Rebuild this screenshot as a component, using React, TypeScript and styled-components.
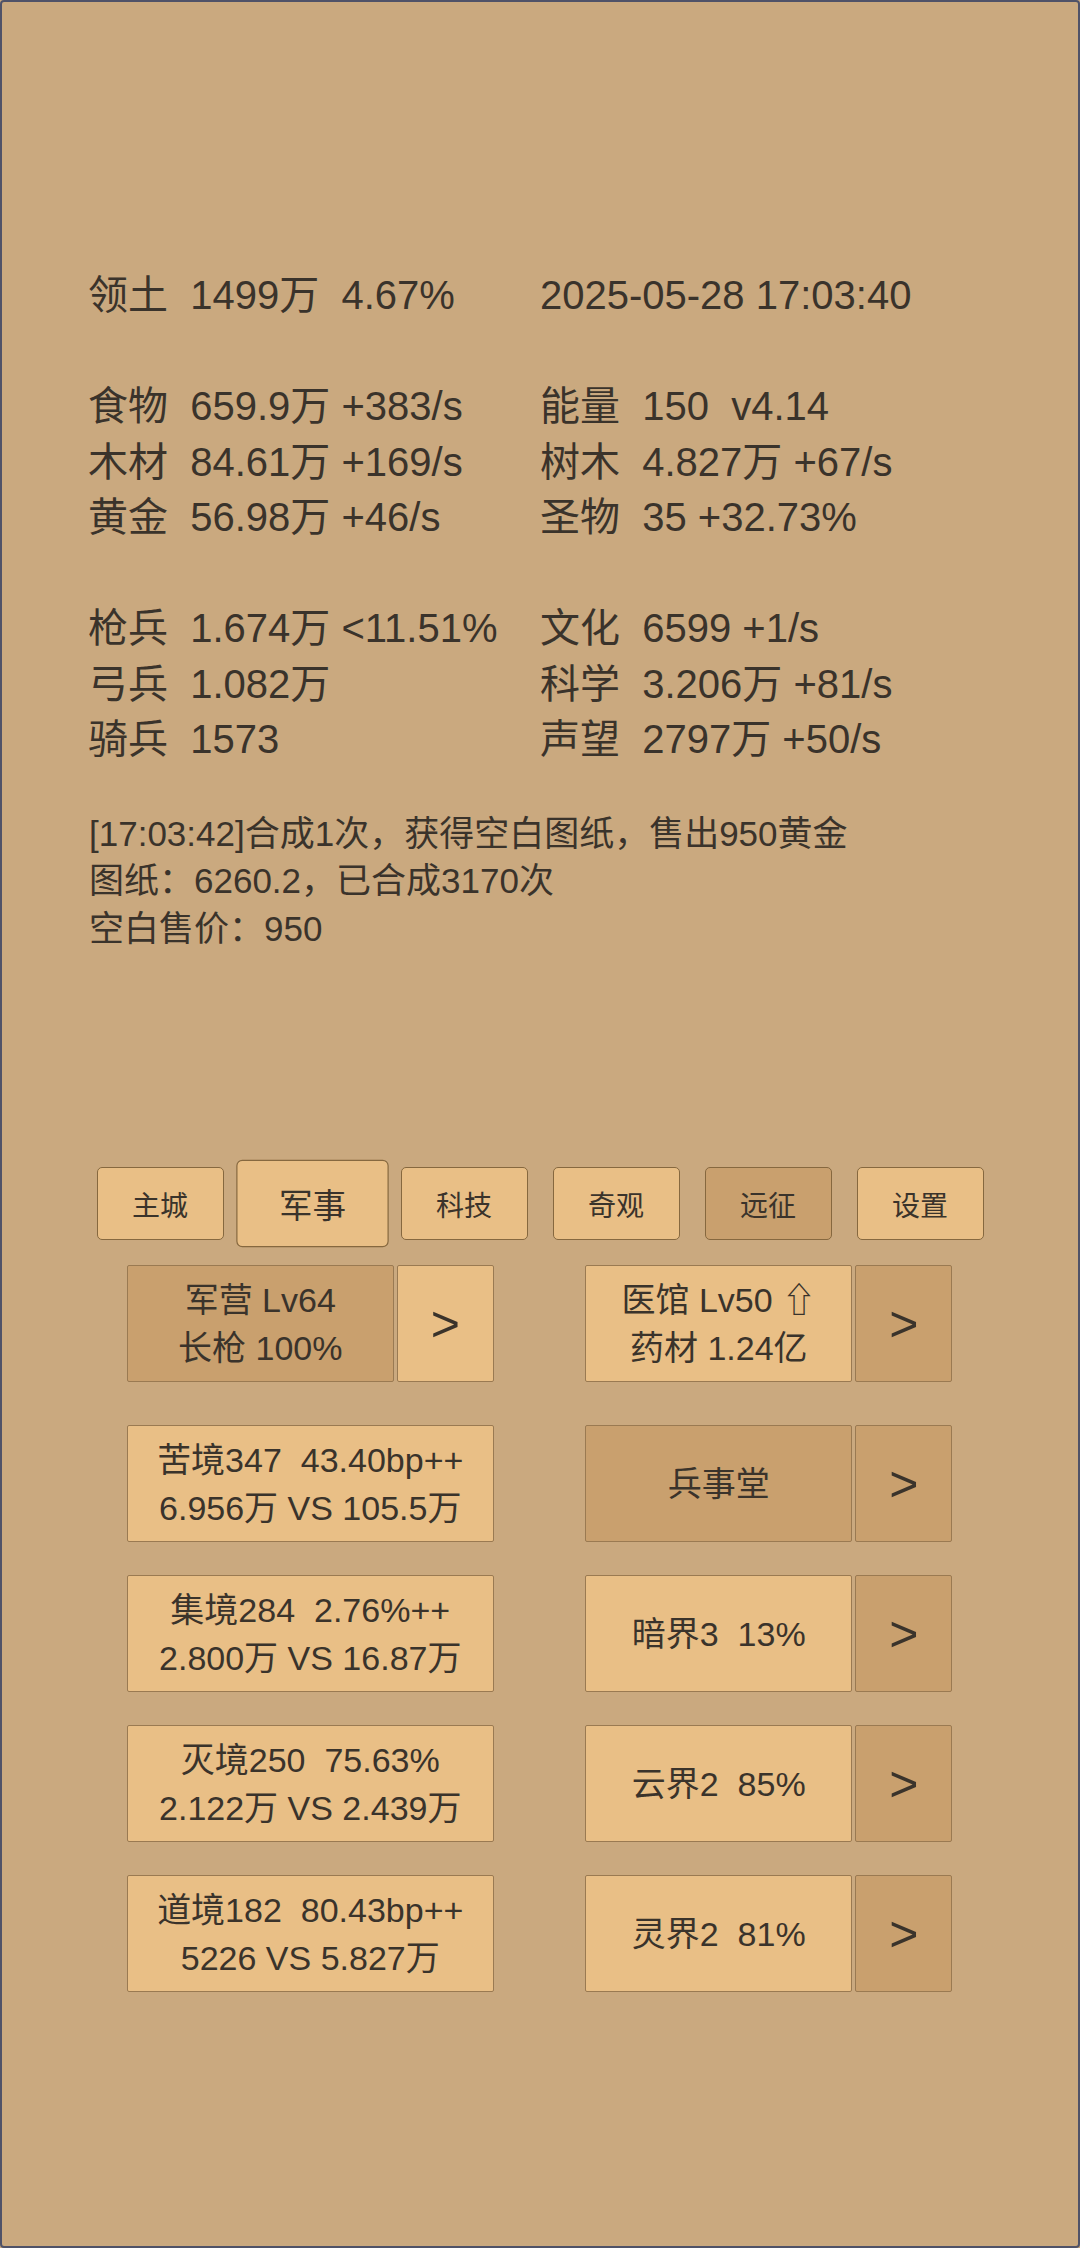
import React from "react";
import styled, { createGlobalStyle, css } from "styled-components";

const GlobalStyle = createGlobalStyle`
  html, body { margin: 0; padding: 0; background: #caa97f; }
  #root { width: 1080px; }
`;

const FONT = `"Liberation Sans", "Noto Sans CJK SC", "DejaVu Sans", sans-serif`;

const Page = styled.div`
  width: 1080px;
  height: 2248px;
  box-sizing: border-box;
  border: 2px solid #4f5268;
  border-radius: 4px;
  background: #caa97f;
  padding-top: 266px;
  font-family: ${FONT};
  color: #3a332b;
  overflow: hidden;
`;

const StatsGrid = styled.div`
  display: grid;
  grid-template-columns: 1fr 1fr;
  padding: 0 86px;
  font-size: 40px;
  line-height: 55.5px;
`;

const StatLine = styled.div`
  white-space: pre;
`;

const StatGap = styled.div`
  grid-column: 1 / -1;
  height: 55.5px;
`;

const Log = styled.div`
  margin-top: 42px;
  padding: 0 87px;
  font-size: 35px;
  line-height: 47.5px;
  white-space: pre;
`;

const Nav = styled.div`
  margin-top: 215px;
  display: flex;
  justify-content: center;
  gap: 25px;
`;

const Tab = styled.div<{ $active?: boolean; $dark?: boolean }>`
  width: 127px;
  height: 73px;
  box-sizing: border-box;
  display: flex;
  align-items: center;
  justify-content: center;
  font-size: 28px;
  border: 1.5px solid #86683f;
  border-radius: 5px;
  background: ${(p) => (p.$dark ? "#c9a06e" : "#e9bf86")};
  ${(p) =>
    p.$active &&
    css`
      transform: scale(1.2);
    `}
`;

const Buildings = styled.div`
  margin-top: 25px;
  display: grid;
  grid-template-columns: 1fr 1fr;
  padding: 0 80px 0 79px;
  justify-items: center;
  row-gap: 33px;
`;

const Pair = styled.div<{ $first?: boolean }>`
  display: flex;
  gap: 3px;
  margin-bottom: ${(p) => (p.$first ? "10px" : "0")};
`;

const boxBase = css<{ $dark?: boolean }>`
  height: 117px;
  box-sizing: border-box;
  display: flex;
  align-items: center;
  justify-content: center;
  text-align: center;
  border: 1px solid #9a7a52;
  border-radius: 2px;
  background: ${(p) => (p.$dark ? "#c9a06e" : "#e9bf86")};
`;

const MainBox = styled.div<{ $dark?: boolean; $wide?: boolean }>`
  ${boxBase}
  width: ${(p) => (p.$wide ? "367px" : "267px")};
  font-size: 34px;
  line-height: 48px;
  white-space: pre;
`;

const ArrowBox = styled.div<{ $dark?: boolean }>`
  ${boxBase}
  width: 97px;
  font-size: 50px;
  line-height: 1;
`;

type Cell =
  | { kind: "pair"; text: string; dark?: boolean; arrowDark?: boolean }
  | { kind: "wide"; text: string };

const cells: Cell[][] = [
  [
    { kind: "pair", text: "军营 Lv64\n长枪 100%", dark: true, arrowDark: false },
    { kind: "pair", text: "医馆 Lv50 ⇧\n药材 1.24亿", dark: false, arrowDark: true },
  ],
  [
    { kind: "wide", text: "苦境347  43.40bp++\n6.956万 VS 105.5万" },
    { kind: "pair", text: "兵事堂", dark: true, arrowDark: true },
  ],
  [
    { kind: "wide", text: "集境284  2.76%++\n2.800万 VS 16.87万" },
    { kind: "pair", text: "暗界3  13%", arrowDark: true },
  ],
  [
    { kind: "wide", text: "灭境250  75.63%\n2.122万 VS 2.439万" },
    { kind: "pair", text: "云界2  85%", arrowDark: true },
  ],
  [
    { kind: "wide", text: "道境182  80.43bp++\n5226 VS 5.827万" },
    { kind: "pair", text: "灵界2  81%", arrowDark: true },
  ],
];

const leftStats = [
  ["领土  1499万  4.67%"],
  ["食物  659.9万 +383/s", "木材  84.61万 +169/s", "黄金  56.98万 +46/s"],
  ["枪兵  1.674万 <11.51%", "弓兵  1.082万", "骑兵  1573"],
];
const rightStats = [
  ["2025-05-28 17:03:40"],
  ["能量  150  v4.14", "树木  4.827万 +67/s", "圣物  35 +32.73%"],
  ["文化  6599 +1/s", "科学  3.206万 +81/s", "声望  2797万 +50/s"],
];

const tabs = [
  { label: "主城" },
  { label: "军事", active: true },
  { label: "科技" },
  { label: "奇观" },
  { label: "远征", dark: true },
  { label: "设置" },
];

export default function App() {
  return (
    <>
      <GlobalStyle />
      <Page>
        <StatsGrid>
          {leftStats.map((group, gi) => (
            <React.Fragment key={gi}>
              {gi > 0 && <StatGap />}
              {group.map((line, li) => (
                <React.Fragment key={li}>
                  <StatLine>{line}</StatLine>
                  <StatLine>{rightStats[gi][li]}</StatLine>
                </React.Fragment>
              ))}
            </React.Fragment>
          ))}
        </StatsGrid>
        <Log>
          {"[17:03:42]合成1次，获得空白图纸，售出950黄金\n图纸：6260.2，已合成3170次\n空白售价：950"}
        </Log>
        <Nav>
          {tabs.map((t) => (
            <Tab key={t.label} $active={t.active} $dark={t.dark}>
              {t.label}
            </Tab>
          ))}
        </Nav>
        <Buildings>
          {cells.map((row, ri) =>
            row.map((c, ci) => (
              <Pair key={`${ri}-${ci}`} $first={ri === 0}>
                {c.kind === "wide" ? (
                  <MainBox $wide>{c.text}</MainBox>
                ) : (
                  <>
                    <MainBox $dark={c.dark}>{c.text}</MainBox>
                    <ArrowBox $dark={c.arrowDark}>&gt;</ArrowBox>
                  </>
                )}
              </Pair>
            ))
          )}
        </Buildings>
      </Page>
    </>
  );
}
